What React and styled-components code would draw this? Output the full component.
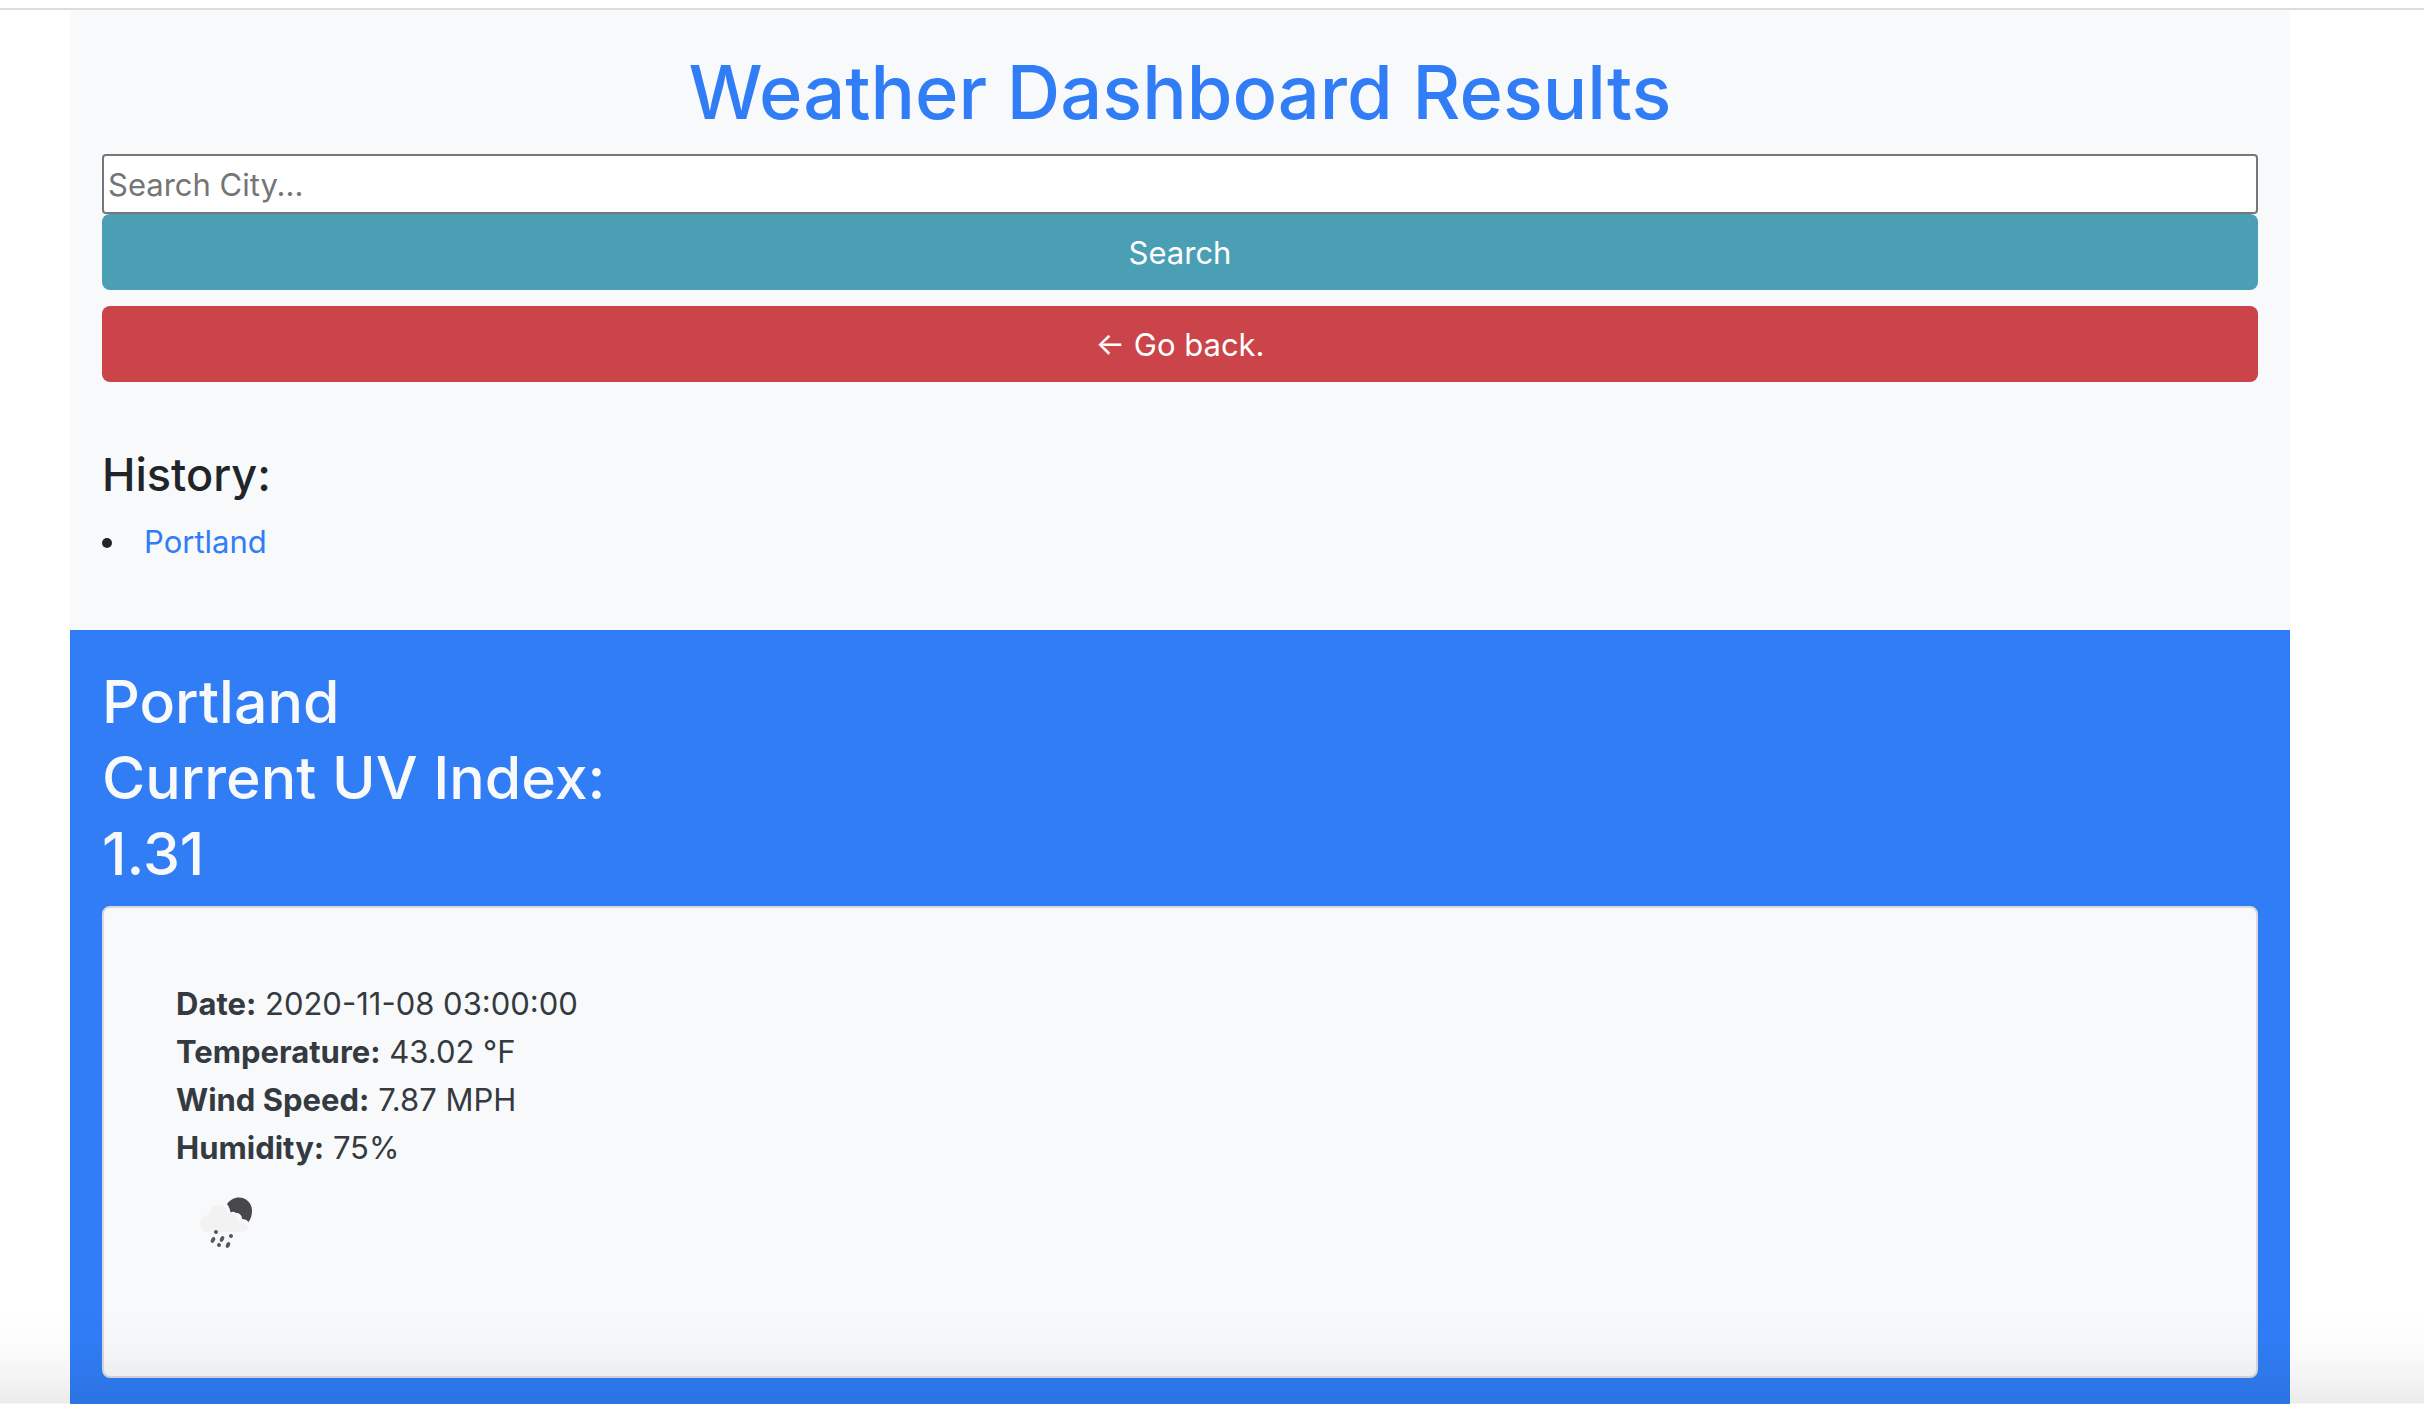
import React from "react";
import styled, { createGlobalStyle } from "styled-components";

const GlobalStyle = createGlobalStyle`
  *, *::before, *::after { box-sizing: border-box; }
  body {
    margin: 0;
    background: #fff;
    color: #212529;
    font-family: Inter, "Liberation Sans", sans-serif;
    font-size: 31px;
    line-height: 48px;
  }
`;

const Page = styled.div`
  display: flex;
  flex-direction: column;
  min-height: 100vh;
  padding-top: 8px;
`;

const TopRule = styled.div`
  height: 2px;
  background: #dcdbe0;
`;

const Container = styled.main`
  flex: 1;
  display: flex;
  flex-direction: column;
  margin: 0 134px 0 70px;
`;

const SearchPanel = styled.section`
  padding: 34px 32px 32px;
  background: #f8f9fb;
`;

const Title = styled.h1`
  margin: 0 0 14px;
  color: #307df6;
  font-size: 74px;
  font-weight: 500;
  line-height: 96px;
  text-align: center;
`;

const SearchForm = styled.form`
  display: flex;
  flex-direction: column;
`;

const SearchInput = styled.input`
  width: 100%;
  height: 60px;
  padding: 2px 4px;
  border: 2px solid #767676;
  border-radius: 4px;
  background: #fff;
  color: #212529;
  font: inherit;

  &::placeholder {
    color: #757575;
    opacity: 1;
  }
`;

const Button = styled.button`
  display: block;
  width: 100%;
  height: 76px;
  margin: 0 0 16px;
  padding: 2px 24px 0;
  border: 0;
  border-radius: 8px;
  background: ${({ $tone }) => ($tone === "danger" ? "#cb444a" : "#4b9fb5")};
  color: #fff;
  font: inherit;
  cursor: pointer;
`;

const History = styled.section`
  padding: 48px 0 32px;
`;

const HistoryTitle = styled.h3`
  margin: 0 0 14px;
  font-size: 45px;
  font-weight: 500;
  line-height: 58px;
`;

const HistoryList = styled.ul`
  margin: 0;
  padding: 0;
  list-style: disc inside;
`;

const HistoryLink = styled.a`
  color: #307df6;
  text-decoration: none;
`;

const Results = styled.section`
  flex: 1;
  padding: 34px 32px 24px;
  background: #307df6;
`;

const ResultsTitle = styled.h2`
  display: flex;
  flex-direction: column;
  margin: 0 0 14px;
  color: #f8f9fb;
  font-size: 59px;
  font-weight: 500;
  line-height: 76px;
`;

const Card = styled.article`
  padding: 72px 72px 104px;
  border: 2px solid #d9dadc;
  border-radius: 8px;
  background: #f8f9fb;
  color: #343a40;
`;

const Reading = styled.p`
  margin: 0;
`;

const WeatherIcon = styled.svg`
  display: block;
  width: 100px;
  height: 100px;
`;

const BottomShade = styled.div`
  position: fixed;
  right: 0;
  bottom: 0;
  left: 0;
  height: 96px;
  background: linear-gradient(
    rgba(0, 0, 0, 0),
    rgba(0, 0, 0, 0.01) 35%,
    rgba(0, 0, 0, 0.04) 70%,
    rgba(0, 0, 0, 0.08)
  );
  border-bottom: 1px solid rgba(0, 0, 0, 0.04);
  pointer-events: none;
`;

const readings = [
  ["Date", "2020-11-08 03:00:00"],
  ["Temperature", "43.02 °F"],
  ["Wind Speed", "7.87 MPH"],
  ["Humidity", "75%"],
];

const drops = [
  [40, 60, 2],
  [37, 68, 3],
  [46, 67, 3],
  [55, 64, 2],
  [43, 73, 2],
  [52, 73, 3],
];

function NightShowers() {
  return (
    <WeatherIcon viewBox="0 0 100 100" role="img" aria-label="Night showers">
      <path
        fill="#48484a"
        d="M51 32C54 28 58 25.500 63 25.500C70.500 25.500 76 31.500 76 38.500C76 43 75 47 72.500 50C71 48 69 47 66 47C66 43 63 40.500 60 41C58 39.500 56 39.500 54.500 40.500C54 37 53 34.500 51 32Z"
      />
      <path
        fill="#f2f2f2"
        d="M32 60a8.500 8.500 0 0 1 1-17c0-6 4-10.500 9.500-10.500 4.500 0 8 3.500 9 8.500 6-1 10 2 10.500 8 4-1 6 1.500 6 3.500 3 0 5 1 4 3-1 2.500-4 4.500-8 4.500z"
      />
      {drops.map(([x, y, length]) => (
        <ellipse
          key={`${x}-${y}`}
          cx={x}
          cy={y}
          rx="2"
          ry={length}
          fill="#58585a"
          transform={`rotate(25 ${x} ${y})`}
        />
      ))}
    </WeatherIcon>
  );
}

export default function App() {
  return (
    <>
      <GlobalStyle />
      <Page>
        <TopRule />
        <Container>
          <SearchPanel>
            <Title>Weather Dashboard Results</Title>
            <SearchForm onSubmit={(event) => event.preventDefault()}>
              <SearchInput type="text" placeholder="Search City..." aria-label="Search City" />
              <Button type="submit">Search</Button>
            </SearchForm>
            <Button type="button" $tone="danger">← Go back.</Button>
            <History>
              <HistoryTitle>History:</HistoryTitle>
              <HistoryList>
                <li>
                  <HistoryLink href="#portland">Portland</HistoryLink>
                </li>
              </HistoryList>
            </History>
          </SearchPanel>
          <Results>
            <ResultsTitle>
              <span>Portland</span>
              <span>Current UV Index:</span>
              <span>1.31</span>
            </ResultsTitle>
            <Card>
              {readings.map(([label, value]) => (
                <Reading key={label}>
                  <b>{label}:</b> {value}
                </Reading>
              ))}
              <NightShowers />
            </Card>
          </Results>
        </Container>
      </Page>
      <BottomShade />
    </>
  );
}
